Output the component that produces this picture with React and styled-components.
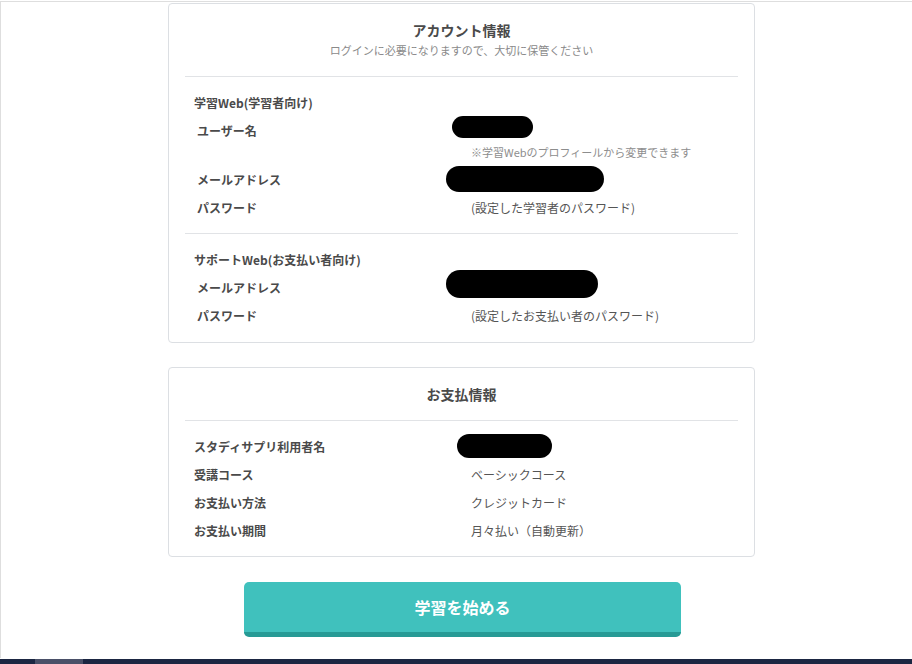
import React from 'react';
import styled, { createGlobalStyle } from 'styled-components';

const GlobalStyle = createGlobalStyle`
	html, body {
		margin: 0;
		padding: 0;
		overflow: hidden;
		background: #fff;
	}
	body {
		font-family: "Noto Sans CJK JP", "Noto Sans", sans-serif;
		color: #4a4a4a;
	}
`;

const Page = styled.div`
	margin-top: 1px;
	border-top: 1px solid #dedede;
	border-left: 1px solid #dedede;
	height: 656px;
`;

const Column = styled.main`
	width: 587px;
	margin-left: 167px;
	padding-top: 1px;
	display: flex;
	flex-direction: column;
	gap: 24px;
`;

const Card = styled.section`
	border: 1px solid #dcdfe3;
	border-radius: 4px;
	background: #fff;
	padding: 0 16px;
`;

const CardHead = styled.header`
	padding: 16px 0 ${props => props.$sub ? 18 : 16}px;
	border-bottom: 1px solid #e1e3e6;
	text-align: center;
`;

const Title = styled.h2`
	margin: 0;
	font-size: 14px;
	line-height: 20px;
	font-weight: 700;
	color: #4a4a4a;
`;

const Subtitle = styled.p`
	margin: 2px 0 0;
	font-size: 11px;
	line-height: 16px;
	color: #8a8a8a;
`;

const Section = styled.div`
	padding: 16px 0 15px 9px;
	display: flex;
	flex-direction: column;
	gap: 8px;
	& + & {
		border-top: 1px solid #e1e3e6;
		padding-top: 16px;
		padding-bottom: 16px;
	}
`;

const SectionTitle = styled.h3`
	margin: 0;
	font-size: 12px;
	line-height: 20px;
	font-weight: 700;
	color: #4a4a4a;
`;

const Row = styled.div`
	display: grid;
	grid-template-columns: ${props => props.$indent ? 274 : 277}px 1fr;
	padding-left: ${props => props.$indent ? 3 : 0}px;
	font-size: 12px;
	line-height: 20px;
`;

const Label = styled.div`
	font-weight: 700;
	color: #4a4a4a;
`;

const Value = styled.div`
	color: #555;
`;

const ValueLine = styled.div`
	position: relative;
	height: 20px;
`;

const Note = styled.div`
	margin: 3px 0 2px;
	font-size: 11px;
	line-height: 16px;
	color: #8d8d8d;
`;

const Redact = styled.span`
	position: absolute;
	left: ${props => props.$x}px;
	top: ${props => props.$y}px;
	width: ${props => props.$w}px;
	height: ${props => props.$h}px;
	background: #000;
	border-radius: ${props => props.$h / 2}px;
`;

const Actions = styled.div`
	display: flex;
	justify-content: flex-start;
	padding-left: 76px;
	padding-top: 1px;
`;

const StartButton = styled.button`
	width: 437px;
	height: 55px;
	border: none;
	border-bottom: 5px solid #279a95;
	border-radius: 5px;
	background: #40c1bd;
	color: #fff;
	font-family: inherit;
	font-size: 16px;
	font-weight: 700;
	padding: 0;
	cursor: pointer;
`;

const Footer = styled.footer`
	position: fixed;
	left: 0;
	right: 0;
	top: 659px;
	height: 40px;
	background: #1b2642;
`;

const FooterTab = styled.span`
	display: block;
	margin-left: 35px;
	width: 48px;
	height: 100%;
	background: #4a5068;
`;

const accountSections = [
	{
		title: '学習Web(学習者向け)',
		rows: [
			{ label: 'ユーザー名', redact: { x: -19, y: -5, w: 81, h: 22 }, note: '※学習Webのプロフィールから変更できます' },
			{ label: 'メールアドレス', redact: { x: -25, y: -4, w: 158, h: 26 } },
			{ label: 'パスワード', value: '(設定した学習者のパスワード)' },
		],
	},
	{
		title: 'サポートWeb(お支払い者向け)',
		rows: [
			{ label: 'メールアドレス', redact: { x: -25, y: -8, w: 152, h: 28 } },
			{ label: 'パスワード', value: '(設定したお支払い者のパスワード)' },
		],
	},
];

const paymentRows = [
	{ label: 'スタディサプリ利用者名', redact: { x: -14, y: -3, w: 95, h: 24 } },
	{ label: '受講コース', value: 'ベーシックコース' },
	{ label: 'お支払い方法', value: 'クレジットカード' },
	{ label: 'お支払い期間', value: '月々払い（自動更新）' },
];

const InfoRow = ({ row, indent }) => (
	<Row $indent={indent}>
		<Label>{row.label}</Label>
		<Value>
			<ValueLine>
				{row.value}
				{row.redact && (
					<Redact $x={row.redact.x} $y={row.redact.y} $w={row.redact.w} $h={row.redact.h} />
				)}
			</ValueLine>
			{row.note && <Note>{row.note}</Note>}
		</Value>
	</Row>
);

const App = () => {
	return (
		<React.Fragment>
			<GlobalStyle />
			<Page>
				<Column>
					<Card>
						<CardHead $sub>
							<Title>アカウント情報</Title>
							<Subtitle>ログインに必要になりますので、大切に保管ください</Subtitle>
						</CardHead>
						{accountSections.map(section => (
							<Section key={section.title}>
								<SectionTitle>{section.title}</SectionTitle>
								{section.rows.map(row => (
									<InfoRow key={row.label} row={row} indent />
								))}
							</Section>
						))}
					</Card>
					<Card>
						<CardHead>
							<Title>お支払情報</Title>
						</CardHead>
						<Section>
							{paymentRows.map(row => (
								<InfoRow key={row.label} row={row} />
							))}
						</Section>
					</Card>
					<Actions>
						<StartButton>学習を始める</StartButton>
					</Actions>
				</Column>
			</Page>
			<Footer>
				<FooterTab />
			</Footer>
		</React.Fragment>
	);
};

export default App;
